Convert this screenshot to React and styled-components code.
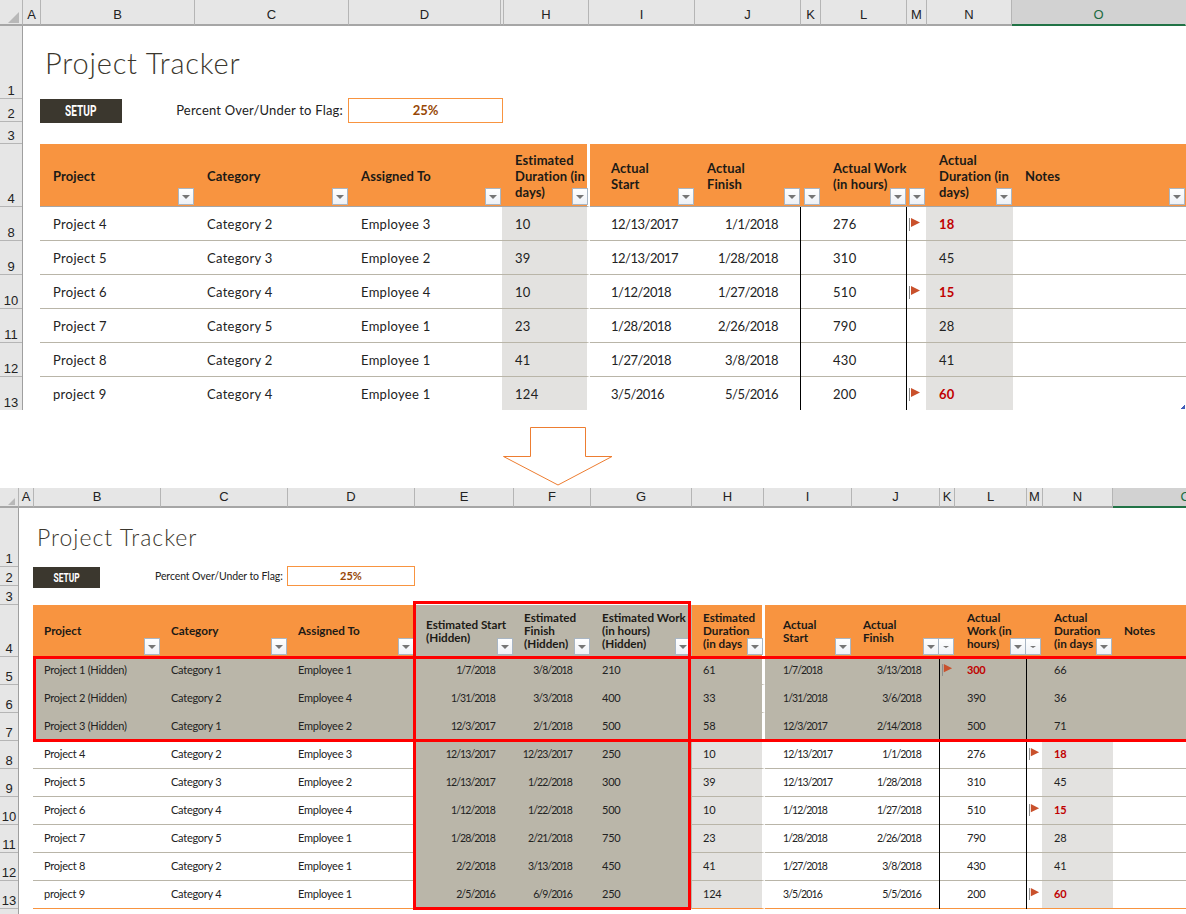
import React from "react";
import styled, { ThemeProvider, createGlobalStyle } from "styled-components";

const ORANGE = "#f89440";
const HIDDEN = "#bab6a9";
const SHADE = "#e3e2e0";
const LINE = "#b9b5a8";

const GlobalStyle = createGlobalStyle`
  html, body {
    margin: 0;
    background: #fff;
    overflow: hidden;
  }
  #root {
    width: 1186px;
    height: 914px;
    overflow: hidden;
    font-family: "Lato", "Liberation Sans", sans-serif;
    color: #222;
  }
`;

const SheetFrame = styled.section`
  position: relative;
  height: ${(p) => p.theme.height}px;
  overflow: hidden;
`;

const ColumnBar = styled.div`
  display: flex;
  height: ${(p) => p.theme.barHeight}px;
  background: #e6e6e6;
  box-sizing: border-box;
`;

const Corner = styled.div`
  position: relative;
  flex: none;
  width: ${(p) => p.theme.headWidth}px;
  box-sizing: border-box;
  border-bottom: 2px solid #a6a6a6;
  border-right: 1px solid #b5b5b5;

  &::after {
    content: "";
    position: absolute;
    right: 3px;
    bottom: 1px;
    border-style: solid;
    border-width: 0 0 ${(p) => p.theme.cornerSize}px ${(p) => p.theme.cornerSize}px;
    border-color: transparent transparent #b8b8b8 transparent;
  }
`;

const Letter = styled.div`
  flex: none;
  width: ${(p) => p.$width}px;
  box-sizing: border-box;
  padding-top: ${(p) => p.theme.barHeight - 19}px;
  overflow: hidden;
  text-align: center;
  font: 13px/16px "Liberation Sans", sans-serif;
  color: ${(p) => (p.$selected ? "#1d6b41" : "#222")};
  background: ${(p) => (p.$selected ? "#d2d2d2" : "transparent")};
  border-bottom: 2px solid ${(p) => (p.$selected ? "#217346" : "#a6a6a6")};
  border-right: 1px solid ${(p) => (p.$selected ? "transparent" : "#b5b5b5")};
`;

const SheetBody = styled.div`
  display: flex;
`;

const RowHeads = styled.div`
  flex: none;
  width: ${(p) => p.theme.headWidth}px;
  box-sizing: border-box;
  background: #e6e6e6;
  border-right: 1px solid #9f9f9f;
`;

const RowHead = styled.div`
  display: flex;
  align-items: flex-end;
  justify-content: center;
  height: ${(p) => p.$height}px;
  box-sizing: border-box;
  border-bottom: 1px solid #b5b5b5;
  font: 13px/15px "Liberation Sans", sans-serif;
  color: #222;
`;

const Content = styled.div`
  flex: 1;
  min-width: 0;
  padding-left: ${(p) => p.theme.contentLeft}px;
`;

const TitleRow = styled.div`
  display: flex;
  align-items: flex-start;
  height: ${(p) => p.theme.titleHeight}px;
  box-sizing: border-box;
  padding: ${(p) => p.theme.titleTop}px 0 0 ${(p) => p.theme.titleLeft}px;
`;

const Title = styled.h1`
  margin: 0;
  font-family: "Lato", sans-serif;
  font-weight: 300;
  font-size: ${(p) => p.theme.titleSize}px;
  line-height: 1.2;
  letter-spacing: ${(p) => p.theme.titleSpacing}px;
  color: #3b372e;
`;

const Controls = styled.div`
  display: flex;
  align-items: flex-start;
  height: ${(p) => p.theme.controlsHeight}px;
  margin-bottom: ${(p) => p.theme.controlsGap}px;
`;

const SetupButton = styled.button`
  flex: none;
  width: ${(p) => p.theme.setupWidth}px;
  height: ${(p) => p.theme.setupHeight}px;
  padding: 0;
  border: none;
  background: #3b372e;
  color: #fff;
  font-family: "Roboto", sans-serif;
  font-weight: 700;
  font-size: ${(p) => p.theme.setupFont}px;
`;

const SetupText = styled.span`
  display: inline-block;
  transform: scaleX(${(p) => p.theme.setupStretch});
`;

const FlagLabel = styled.span`
  flex: none;
  width: ${(p) => p.theme.labelWidth}px;
  margin-left: ${(p) => p.theme.labelLeft}px;
  height: ${(p) => p.theme.setupHeight}px;
  line-height: ${(p) => p.theme.setupHeight - 2}px;
  text-align: right;
  font-size: ${(p) => p.theme.labelFont}px;
  letter-spacing: ${(p) => p.theme.labelSpacing}px;
  white-space: nowrap;
`;

const FlagValue = styled.div`
  flex: none;
  width: ${(p) => p.theme.boxWidth}px;
  height: ${(p) => p.theme.boxHeight}px;
  margin: -1px 0 0 5px;
  box-sizing: border-box;
  border: 1px solid ${ORANGE};
  text-align: center;
  line-height: ${(p) => p.theme.boxHeight - 2}px;
  font-weight: 700;
  font-size: ${(p) => p.theme.bodyFont}px;
  color: #974806;
`;

const Row = styled.div`
  display: grid;
  grid-template-columns: ${(p) => p.$columns};
  height: ${(p) => p.$height}px;
`;

const toneColor = { plain: "#fff", shade: SHADE, hidden: HIDDEN };

const Cell = styled.div`
  position: relative;
  display: flex;
  align-items: center;
  justify-content: ${(p) => (p.$right ? "flex-end" : "flex-start")};
  box-sizing: border-box;
  min-width: 0;
  padding: 0 ${(p) => p.$padRight || 0}px ${(p) => p.theme.cellLift}px ${(p) => p.$pad || 0}px;
  background: ${(p) => toneColor[p.$tone]};
  border-bottom: 1px solid ${(p) => (p.$tone === "hidden" ? HIDDEN : p.$line || "transparent")};
  border-right: ${(p) => (p.$split ? "3px solid #fff" : "none")};
  font-size: ${(p) => (p.$date ? p.theme.dateFont : p.theme.bodyFont)}px;
  letter-spacing: ${(p) => (p.$date ? p.theme.dateSpacing : p.theme.bodySpacing)}px;
  white-space: nowrap;

  ${(p) =>
    p.$rule &&
    `&::after {
      content: "";
      position: absolute;
      top: 0;
      right: 0;
      bottom: -1px;
      width: 1px;
      background: #000;
    }`}
`;

const Flagged = styled.b`
  font-weight: 700;
  color: #c00000;
`;

const FlagIcon = styled.svg`
  align-self: flex-start;
  width: ${(p) => p.theme.flagWidth}px;
  height: ${(p) => p.theme.flagHeight}px;
  margin-top: ${(p) => p.theme.flagTop}px;
`;

const HeadCell = styled.div`
  position: relative;
  display: flex;
  flex-direction: column;
  justify-content: center;
  box-sizing: border-box;
  padding: ${(p) => p.theme.headDrop}px 0 0 ${(p) => p.$pad || 0}px;
  background: ${(p) => (p.$hidden ? HIDDEN : ORANGE)};
  border-bottom: 1px solid #a6a6a6;
  border-right: ${(p) => (p.$split ? "3px solid #fff" : "none")};
  font-weight: 700;
  font-size: ${(p) => p.theme.headFont}px;
  letter-spacing: ${(p) => p.theme.headSpacing}px;
  line-height: ${(p) => p.theme.headLine}px;
  color: #1c1a16;
  white-space: nowrap;
`;

const FilterButton = styled.span`
  position: absolute;
  right: ${(p) => (p.$split ? -1 : 1)}px;
  bottom: 1px;
  display: flex;
  align-items: center;
  justify-content: center;
  width: 16px;
  height: ${(p) => p.theme.filterHeight}px;
  box-sizing: border-box;
  background: linear-gradient(#ffffff, #eef1f6);
  border: 1px solid #a9b6c4;

  &::after {
    content: "";
    border-style: solid;
    border-width: ${(p) => (p.$small ? "2px 3px 0" : "4px 4px 0")};
    border-color: #757575 transparent transparent;
  }
`;

const ArrowRow = styled.div`
  height: 78px;
  box-sizing: border-box;
  padding: 17px 0 0 503px;
`;

const HighlightBox = styled.div`
  position: absolute;
  left: ${(p) => p.$left}px;
  top: ${(p) => p.$top}px;
  width: ${(p) => p.$width}px;
  height: ${(p) => p.$height}px;
  box-sizing: border-box;
  border: 3px solid #f00;
  pointer-events: none;
`;

const ResizeHandle = styled.i`
  position: absolute;
  right: 1px;
  bottom: 1px;
  width: 4px;
  height: 4px;
  background: linear-gradient(135deg, transparent 50%, #3f5cb8 50%);
`;

const p4 = { project: "Project 4", category: "Category 2", employee: "Employee 3", estStart: "12/13/2017", estFinish: "12/23/2017", estWork: "250", estDuration: "10", actStart: "12/13/2017", actFinish: "1/1/2018", actWork: "276", actDuration: "18", flag: "duration" };
const p5 = { project: "Project 5", category: "Category 3", employee: "Employee 2", estStart: "12/13/2017", estFinish: "1/22/2018", estWork: "300", estDuration: "39", actStart: "12/13/2017", actFinish: "1/28/2018", actWork: "310", actDuration: "45" };
const p6 = { project: "Project 6", category: "Category 4", employee: "Employee 4", estStart: "1/12/2018", estFinish: "1/22/2018", estWork: "500", estDuration: "10", actStart: "1/12/2018", actFinish: "1/27/2018", actWork: "510", actDuration: "15", flag: "duration" };
const p7 = { project: "Project 7", category: "Category 5", employee: "Employee 1", estStart: "1/28/2018", estFinish: "2/21/2018", estWork: "750", estDuration: "23", actStart: "1/28/2018", actFinish: "2/26/2018", actWork: "790", actDuration: "28" };
const p8 = { project: "Project 8", category: "Category 2", employee: "Employee 1", estStart: "2/2/2018", estFinish: "3/13/2018", estWork: "450", estDuration: "41", actStart: "1/27/2018", actFinish: "3/8/2018", actWork: "430", actDuration: "41" };
const p9 = { project: "project 9", category: "Category 4", employee: "Employee 1", estStart: "2/5/2016", estFinish: "6/9/2016", estWork: "250", estDuration: "124", actStart: "3/5/2016", actFinish: "5/5/2016", actWork: "200", actDuration: "60", flag: "duration" };

const visibleRows = [p4, p5, p6, p7, p8, p9];

const hiddenRows = [
  { project: "Project 1 (Hidden)", category: "Category 1", employee: "Employee 1", estStart: "1/7/2018", estFinish: "3/8/2018", estWork: "210", estDuration: "61", actStart: "1/7/2018", actFinish: "3/13/2018", actWork: "300", actDuration: "66", flag: "work", hidden: true },
  { project: "Project 2 (Hidden)", category: "Category 2", employee: "Employee 4", estStart: "1/31/2018", estFinish: "3/3/2018", estWork: "400", estDuration: "33", actStart: "1/31/2018", actFinish: "3/6/2018", actWork: "390", actDuration: "36", hidden: true },
  { project: "Project 3 (Hidden)", category: "Category 1", employee: "Employee 2", estStart: "12/3/2017", estFinish: "2/1/2018", estWork: "500", estDuration: "58", actStart: "12/3/2017", actFinish: "2/14/2018", actWork: "500", actDuration: "71", hidden: true },
];

const topSheet = {
  theme: {
    height: 410, barHeight: 26, headWidth: 23, cornerSize: 11, contentLeft: 17,
    titleHeight: 73, titleTop: 20, titleLeft: 5, titleSize: 29, titleSpacing: 0.8,
    controlsHeight: 23, controlsGap: 22,
    setupWidth: 82, setupHeight: 24, setupFont: 14, setupStretch: 0.72, labelWidth: 167, labelLeft: 54,
    labelFont: 13, labelSpacing: 0.2, boxWidth: 155, boxHeight: 25,
    bodyFont: 13, bodySpacing: 0.3, dateFont: 13, dateSpacing: -0.5, cellLift: 0,
    headFont: 13, headSpacing: 0.1, headLine: 16, headDrop: 2,
    filterHeight: 17, flagTop: 11, flagWidth: 12, flagHeight: 13,
  },
  letters: [["A", 18], ["B", 154], ["C", 154], ["D", 152], ["", 3], ["H", 85], ["I", 106], ["J", 106], ["K", 20], ["L", 86], ["M", 20], ["N", 85], ["O", 174, true]],
  rowHeads: [["1", 73], ["2", 23], ["3", 22], ["4", 63], ["8", 34], ["9", 34], ["10", 34], ["11", 34], ["12", 34], ["13", 34]],
  headHeight: 63,
  rowHeight: 34,
  lastLine: "transparent",
  columns: [
    { width: 155, head: ["Project"], field: "project", pad: 13 },
    { width: 154, head: ["Category"], field: "category", pad: 12 },
    { width: 153, head: ["Assigned To"], field: "employee", pad: 12 },
    { width: 88, head: ["Estimated", "Duration (in", "days)"], field: "estDuration", pad: 13, tone: "shade", split: true },
    { width: 105, head: ["Actual", "Start"], field: "actStart", pad: 21, date: true },
    { width: 106, head: ["Actual", "Finish"], field: "actFinish", pad: 12, right: true, padRight: 23, rule: true, date: true },
    { width: 20, head: [], flagFor: "work" },
    { width: 86, head: ["Actual Work", "(in hours)"], field: "actWork", pad: 12, rule: true },
    { width: 19, head: [], flagFor: "duration" },
    { width: 87, head: ["Actual", "Duration (in", "days)"], field: "actDuration", pad: 13, tone: "shade", filterInset: 2 },
    { width: 173, head: ["Notes"], pad: 12 },
  ],
  rows: visibleRows,
};

const bottomSheet = {
  theme: {
    height: 426, barHeight: 20, headWidth: 19, cornerSize: 7, contentLeft: 14,
    titleHeight: 59, titleTop: 16, titleLeft: 4, titleSize: 23, titleSpacing: 1,
    controlsHeight: 19, controlsGap: 19,
    setupWidth: 67, setupHeight: 21, setupFont: 12, setupStretch: 0.7, labelWidth: 127, labelLeft: 55,
    labelFont: 10.5, labelSpacing: -0.1, boxWidth: 128, boxHeight: 20,
    bodyFont: 11, bodySpacing: -0.25, dateFont: 10.5, dateSpacing: -0.9, cellLift: 2,
    headFont: 11.7, headSpacing: 0, headLine: 13, headDrop: 0,
    filterHeight: 17, flagTop: 7, flagWidth: 11, flagHeight: 12,
  },
  letters: [["A", 15], ["B", 127], ["C", 127], ["D", 127], ["E", 99], ["F", 77], ["G", 101], ["H", 72], ["I", 88], ["J", 88], ["K", 15], ["L", 72], ["M", 16], ["N", 70], ["O", 146, true]],
  rowHeads: [["1", 59], ["2", 19], ["3", 19], ["4", 52], ["5", 28], ["6", 28], ["7", 28], ["8", 28], ["9", 28], ["10", 28], ["11", 28], ["12", 28], ["13", 28], ["", 28]],
  headHeight: 52,
  rowHeight: 28,
  lastLine: ORANGE,
  columns: [
    { width: 128, head: ["Project"], field: "project", pad: 11 },
    { width: 127, head: ["Category"], field: "category", pad: 10 },
    { width: 127, head: ["Assigned To"], field: "employee", pad: 10 },
    { width: 99, head: ["Estimated Start", "(Hidden)"], field: "estStart", pad: 11, right: true, padRight: 19, tone: "hidden", date: true },
    { width: 77, head: ["Estimated", "Finish", "(Hidden)"], field: "estFinish", pad: 10, right: true, padRight: 19, tone: "hidden", date: true },
    { width: 101, head: ["Estimated Work", "(in hours)", "(Hidden)"], field: "estWork", pad: 11, tone: "hidden" },
    { width: 73, head: ["Estimated", "Duration", "(in days"], field: "estDuration", pad: 11, tone: "shade", split: true },
    { width: 87, head: ["Actual", "Start"], field: "actStart", pad: 18, date: true },
    { width: 88, head: ["Actual", "Finish"], field: "actFinish", pad: 11, right: true, padRight: 19, rule: true, date: true },
    { width: 15, head: [], flagFor: "work", small: true },
    { width: 72, head: ["Actual", "Work (in", "hours)"], field: "actWork", pad: 12, rule: true },
    { width: 15, head: [], flagFor: "duration", small: true },
    { width: 71, head: ["Actual", "Duration", "(in days"], field: "actDuration", pad: 12, tone: "shade" },
    { width: 146, head: ["Notes"], pad: 11 },
  ],
  rows: [...hiddenRows, ...visibleRows],
};

const Flag = () => (
  <FlagIcon viewBox="0 0 12 13" aria-hidden="true">
    <rect x="0" y="0" width="1" height="13" fill="#8a8a8a" />
    <path d="M2 0L11 4.5L2 9Z" fill="#c9512c" />
  </FlagIcon>
);

const BodyCell = ({ column, row, line }) => {
  const flaggedField = row.flag === "work" ? "actWork" : row.flag === "duration" ? "actDuration" : null;
  const value = column.field ? row[column.field] : null;
  return (
    <Cell
      $tone={row.hidden ? "hidden" : column.tone || "plain"}
      $pad={column.flagFor ? 2 : column.pad}
      $padRight={column.padRight}
      $right={column.right}
      $split={column.split}
      $rule={column.rule}
      $date={column.date}
      $line={line}
    >
      {column.flagFor && row.flag === column.flagFor && <Flag />}
      {column.field === flaggedField ? <Flagged>{value}</Flagged> : value}
    </Cell>
  );
};

const Sheet = ({ sheet, title, children }) => {
  const columnTemplate = sheet.columns.map((c) => `${c.width}px`).join(" ");
  return (
    <ThemeProvider theme={sheet.theme}>
      <SheetFrame>
        <ColumnBar>
          <Corner />
          {sheet.letters.map(([label, width, selected], i) => (
            <Letter key={i} $width={width} $selected={selected}>
              {label}
            </Letter>
          ))}
        </ColumnBar>
        <SheetBody>
          <RowHeads>
            {sheet.rowHeads.map(([label, height], i) => (
              <RowHead key={i} $height={height}>
                {label}
              </RowHead>
            ))}
          </RowHeads>
          <Content>
            <TitleRow>
              <Title>{title}</Title>
            </TitleRow>
            <Controls>
              <SetupButton>
                <SetupText>SETUP</SetupText>
              </SetupButton>
              <FlagLabel>Percent Over/Under to Flag:</FlagLabel>
              <FlagValue>25%</FlagValue>
            </Controls>
            <Row $columns={columnTemplate} $height={sheet.headHeight}>
              {sheet.columns.map((column, i) => (
                <HeadCell key={i} $pad={column.pad} $hidden={column.tone === "hidden"} $split={column.split}>
                  {column.head.map((line) => (
                    <span key={line}>{line}</span>
                  ))}
                  <FilterButton $split={column.split} $small={column.small} />
                </HeadCell>
              ))}
            </Row>
            {sheet.rows.map((row, r) => {
              const last = r === sheet.rows.length - 1;
              return (
                <Row key={r} $columns={columnTemplate} $height={sheet.rowHeight}>
                  {sheet.columns.map((column, c) => (
                    <BodyCell key={c} column={column} row={row} line={last ? sheet.lastLine : LINE} />
                  ))}
                </Row>
              );
            })}
          </Content>
        </SheetBody>
        {children}
      </SheetFrame>
    </ThemeProvider>
  );
};

export default function App() {
  return (
    <>
      <GlobalStyle />
      <Sheet sheet={topSheet} title="Project Tracker">
        <ResizeHandle />
      </Sheet>
      <ArrowRow>
        <svg width="110" height="59" viewBox="0 0 110 59" aria-hidden="true">
          <path d="M27.5 0.5H82.5V29.5H109L55 58L0.5 29.5H27.5Z" fill="#fff" stroke="#ed7d31" strokeWidth="1" />
        </svg>
      </ArrowRow>
      <Sheet sheet={bottomSheet} title="Project Tracker">
        <HighlightBox $left={33} $top={168} $width={1160} $height={86} />
        <HighlightBox $left={413} $top={113} $width={278} $height={309} />
      </Sheet>
    </>
  );
}
